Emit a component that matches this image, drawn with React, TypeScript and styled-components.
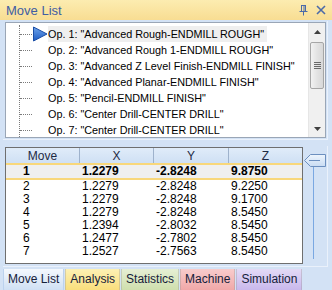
import { createGlobalStyle } from 'styled-components';
import styled from 'styled-components';

const GlobalStyle = createGlobalStyle`
  html, body {
    margin: 0;
    padding: 0;
    background: #d3e2f5;
  }
  * {
    box-sizing: border-box;
  }
`;

const operations = [
  'Op. 1: "Advanced Rough-ENDMILL ROUGH"',
  'Op. 2: "Advanced Rough 1-ENDMILL ROUGH"',
  'Op. 3: "Advanced Z Level Finish-ENDMILL FINISH"',
  'Op. 4: "Advanced Planar-ENDMILL FINISH"',
  'Op. 5: "Pencil-ENDMILL FINISH"',
  'Op. 6: "Center Drill-CENTER DRILL"',
  'Op. 7: "Center Drill-CENTER DRILL"',
];

const moves = [
  ['1', '1.2279', '-2.8248', '9.8750'],
  ['2', '1.2279', '-2.8248', '9.2250'],
  ['3', '1.2279', '-2.8248', '9.1700'],
  ['4', '1.2279', '-2.8248', '8.5450'],
  ['5', '1.2394', '-2.8032', '8.5450'],
  ['6', '1.2477', '-2.7802', '8.5450'],
  ['7', '1.2527', '-2.7563', '8.5450'],
];

const tabs = [
  { label: 'Move List', top: '#f4f8fd', bottom: '#cfe0f4', active: true },
  { label: 'Analysis', top: '#fdf1b4', bottom: '#f9de7c' },
  { label: 'Statistics', top: '#e6efd4', bottom: '#cfdfad' },
  { label: 'Machine', top: '#f8cccc', bottom: '#f0a8a8' },
  { label: 'Simulation', top: '#e3daf6', bottom: '#c9b8ec' },
];

const Panel = styled.div`
  width: 332px;
  height: 290px;
  overflow: hidden;
  display: flex;
  flex-direction: column;
  background: #d3e2f5;
  font-family: 'Liberation Sans', Arial, sans-serif;
  font-size: 11px;
  color: #000;
`;

const TitleBar = styled.div`
  height: 20px;
  flex: none;
  display: flex;
  align-items: center;
  padding: 0 6px;
  background: linear-gradient(#fcecb0, #f8dd92);
  color: #3f5da3;
  font-size: 13px;
`;

const Title = styled.span`
  flex: 1;
  padding-top: 1px;
`;

const TitleButtons = styled.div`
  display: flex;
  gap: 8px;
  align-items: center;
  color: #4b6aa8;
`;

const ListFrame = styled.div`
  margin: 1px 4px 0 3px;
  padding: 1px 1px 1px 2px;
  height: 119px;
  flex: none;
  border-right: 1px solid #eaf1fb;
  border-bottom: 1px solid #eaf1fb;
`;

const ListBox = styled.div`
  height: 116px;
  display: flex;
  background: #fff;
  border: 1px solid #9aa6b6;
  overflow: hidden;
`;

const Tree = styled.div`
  flex: 1;
  position: relative;
  padding-top: 3px;
  overflow: hidden;
  font-size: 10.8px;
`;

const TreeTrunk = styled.div`
  position: absolute;
  left: 13px;
  top: 2px;
  bottom: 0;
  border-left: 1px dotted #7a7a7a;
`;

const OpRow = styled.div`
  height: 16px;
  display: flex;
  align-items: center;
  white-space: nowrap;
`;

const Branch = styled.div`
  width: 12px;
  margin-left: 14px;
  border-top: 1px dotted #7a7a7a;
  flex: none;
`;

const Marker = styled.div`
  width: 16px;
  height: 16px;
  flex: none;
  display: flex;
  align-items: center;
`;

const OpLabel = styled.span<{ $current?: boolean }>`
  height: 16px;
  line-height: 16px;
  padding: 0 3px 0 0;
  background: ${({ $current }) => ($current ? '#efefef' : 'transparent')};
`;

const ScrollBar = styled.div`
  width: 17px;
  flex: none;
  display: flex;
  flex-direction: column;
  align-items: center;
  background: #f0f0f0;
  border-left: 1px solid #e6e6e6;
`;

const ScrollArrow = styled.div`
  height: 17px;
  width: 100%;
  flex: none;
  display: flex;
  align-items: center;
  justify-content: center;
`;

const ScrollTrack = styled.div`
  flex: 1;
  width: 100%;
  padding: 2px 1px 0;
`;

const Thumb = styled.div`
  height: 47px;
  border: 1px solid #a6a6a6;
  border-radius: 2px;
  background: linear-gradient(90deg, #f2f2f2, #e3e3e3 50%, #d8d8d8);
  display: flex;
  flex-direction: column;
  align-items: center;
  justify-content: center;
  gap: 1px;
`;

const Grip = styled.div`
  width: 7px;
  height: 1px;
  background: #6a6a6a;
`;

const TableArea = styled.div`
  margin: 6px 4px 0 3px;
  padding: 1px 0 1px 2px;
  height: 121px;
  flex: none;
  display: flex;
  border-right: 1px solid #eaf1fb;
  border-bottom: 1px solid #eaf1fb;
`;

const TableBox = styled.div`
  width: 298px;
  height: 117px;
  flex: none;
  background: #fff;
  border: 1px solid #6f6f6f;
  overflow: hidden;
`;

const Grid = styled.div<{ $bold?: boolean; $height: number }>`
  display: grid;
  grid-template-columns: 74px 74px 75px 73px;
  height: ${({ $height }) => $height}px;
  align-items: center;
  font-weight: ${({ $bold }) => ($bold ? 'bold' : 'normal')};
`;

const HeaderRow = styled(Grid)`
  background: linear-gradient(#e0ecf9, #cfe0f4);
  border-bottom: 2px solid #f8d77a;
  align-items: stretch;
  font-size: 12px;
  color: #1e2a44;
`;

const HeaderCell = styled.div`
  display: flex;
  align-items: center;
  justify-content: center;
  border-right: 1px solid #9eb2cc;
  &:last-child {
    border-right: none;
  }
`;

const CurrentRow = styled(Grid)`
  background: #efefef;
  border-bottom: 2px solid #f8d77a;
  font-size: 12px;
`;

const Cell = styled.div<{ $first?: boolean }>`
  padding-left: ${({ $first }) => ($first ? '17px' : '2px')};
  line-height: 13px;
`;

const BodyCell = styled(Cell)`
  font-size: 12px;
`;

const SliderCol = styled.div`
  flex: 1;
  display: flex;
  flex-direction: column;
  align-items: flex-start;
  padding: 7px 0 0 1px;
`;

const SliderTrack = styled.div`
  margin-left: 9px;
  width: 1px;
  height: 92px;
  background: #7aa8e2;
`;

const Tabs = styled.div`
  display: flex;
  padding: 2px 0 0 3px;
  gap: 1px;
  height: 25px;
`;

const Tab = styled.div<{ $top: string; $bottom: string; $active?: boolean }>`
  height: 22px;
  padding: 0 4px 1px;
  display: flex;
  align-items: center;
  font-size: 12px;
  color: #15213a;
  background: linear-gradient(${({ $top }) => $top}, ${({ $bottom }) => $bottom});
  border: 1px solid ${({ $active }) => ($active ? '#bcd2ee' : 'rgba(150,150,150,0.35)')};
  border-top: none;
  border-radius: 0 0 2px 2px;
`;

function PlayMarker() {
  return (
    <svg width="16" height="16" viewBox="0 0 16 16">
      <defs>
        <linearGradient id="pm" x1="0" y1="0" x2="0" y2="1">
          <stop offset="0" stopColor="#6fa4ea" />
          <stop offset="1" stopColor="#1e5cc4" />
        </linearGradient>
      </defs>
      <path d="M1.5 1 L15 8 L1.5 15 Z" fill="url(#pm)" stroke="#1b4ea6" strokeWidth="1" strokeLinejoin="round" />
    </svg>
  );
}

function SliderThumb() {
  return (
    <svg width="22" height="13" viewBox="0 0 22 13">
      <defs>
        <linearGradient id="st" x1="0" y1="0" x2="0" y2="1">
          <stop offset="0" stopColor="#eef5fd" />
          <stop offset="1" stopColor="#c9dcf3" />
        </linearGradient>
      </defs>
      <path d="M0.5 6.5 L6.5 0.5 H21.5 V12.5 H6.5 Z" fill="url(#st)" stroke="#6c8fbf" />
      <path d="M5 6.5 H16" stroke="#6c8fbf" />
    </svg>
  );
}

export default function App() {
  const [current, ...rest] = moves;
  return (
    <Panel>
      <GlobalStyle />
      <TitleBar>
        <Title>Move List</Title>
        <TitleButtons>
          <svg width="9" height="11" viewBox="0 0 9 11">
            <path d="M2 0.5 H7 M2.5 0.5 V6 M6.5 0.5 V6 M0.5 6.5 H8.5 M4.5 6.5 V10.5 M5 1 V6" stroke="#4b6aa8" fill="none" />
          </svg>
          <svg width="10" height="10" viewBox="0 0 10 10">
            <path d="M1 1 L9 9 M9 1 L1 9" stroke="#4b6aa8" strokeWidth="1.6" />
          </svg>
        </TitleButtons>
      </TitleBar>

      <ListFrame>
        <ListBox>
          <Tree>
            <TreeTrunk />
            {operations.map((op, i) => (
              <OpRow key={op}>
                <Branch />
                <Marker>{i === 0 && <PlayMarker />}</Marker>
                <OpLabel $current={i === 0}>{op}</OpLabel>
              </OpRow>
            ))}
          </Tree>
          <ScrollBar>
            <ScrollArrow>
              <svg width="7" height="4" viewBox="0 0 7 4">
                <path d="M0 4 L3.5 0 L7 4 Z" fill="#404040" />
              </svg>
            </ScrollArrow>
            <ScrollTrack>
              <Thumb>
                <Grip />
                <Grip />
                <Grip />
                <Grip />
              </Thumb>
            </ScrollTrack>
            <ScrollArrow>
              <svg width="7" height="4" viewBox="0 0 7 4">
                <path d="M0 0 L3.5 4 L7 0 Z" fill="#404040" />
              </svg>
            </ScrollArrow>
          </ScrollBar>
        </ListBox>
      </ListFrame>

      <TableArea>
        <TableBox>
          <HeaderRow $height={17}>
            <HeaderCell>Move</HeaderCell>
            <HeaderCell>X</HeaderCell>
            <HeaderCell>Y</HeaderCell>
            <HeaderCell>Z</HeaderCell>
          </HeaderRow>
          <CurrentRow $bold $height={15}>
            {current.map((v, i) => (
              <Cell key={i} $first={i === 0}>
                {v}
              </Cell>
            ))}
          </CurrentRow>
          {rest.map((row) => (
            <Grid key={row[0]} $height={13}>
              {row.map((v, i) => (
                <BodyCell key={i} $first={i === 0}>
                  {v}
                </BodyCell>
              ))}
            </Grid>
          ))}
        </TableBox>
        <SliderCol>
          <SliderThumb />
          <SliderTrack />
        </SliderCol>
      </TableArea>

      <Tabs>
        {tabs.map((t) => (
          <Tab key={t.label} $top={t.top} $bottom={t.bottom} $active={t.active}>
            {t.label}
          </Tab>
        ))}
      </Tabs>
    </Panel>
  );
}
